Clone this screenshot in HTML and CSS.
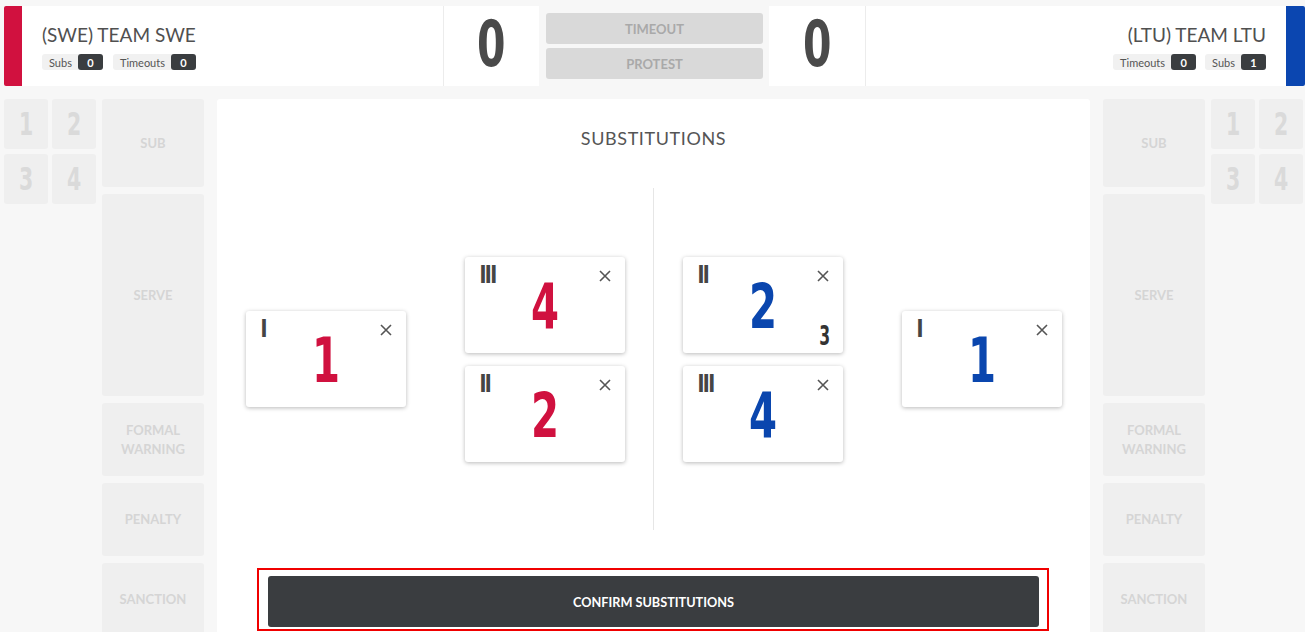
FILE: index.html
```html
<!DOCTYPE html>
<html lang="en">
<head>
<meta charset="utf-8">
<title>Substitutions</title>
<link rel="stylesheet" href="styles.css">
</head>
<body>
<header class="scoreboard">
  <div class="team team-left">
    <div class="team-bar"></div>
    <div class="team-info">
      <div class="team-name">(SWE) TEAM SWE</div>
      <div class="stats">
        <span class="pill">Subs <b>0</b></span>
        <span class="pill">Timeouts <b>0</b></span>
      </div>
    </div>
  </div>
  <div class="score score-left"><span class="cond">0</span></div>
  <div class="mid">
    <button class="mid-btn">TIMEOUT</button>
    <button class="mid-btn">PROTEST</button>
  </div>
  <div class="score score-right"><span class="cond">0</span></div>
  <div class="team team-right">
    <div class="team-info">
      <div class="team-name">(LTU) TEAM LTU</div>
      <div class="stats">
        <span class="pill">Timeouts <b>0</b></span>
        <span class="pill">Subs <b>1</b></span>
      </div>
    </div>
    <div class="team-bar"></div>
  </div>
</header>

<main class="court">
  <aside class="side side-left">
    <div class="tiles">
      <div class="tile"><span class="cond">1</span></div>
      <div class="tile"><span class="cond">2</span></div>
      <div class="tile"><span class="cond">3</span></div>
      <div class="tile"><span class="cond">4</span></div>
    </div>
    <div class="actions">
      <div class="action a-sub">SUB</div>
      <div class="action a-serve">SERVE</div>
      <div class="action a-sm">FORMAL<br>WARNING</div>
      <div class="action a-sm">PENALTY</div>
      <div class="action a-sm">SANCTION</div>
    </div>
  </aside>

  <section class="panel">
    <h1 class="panel-title">SUBSTITUTIONS</h1>
    <div class="sub-body">
      <div class="half">
        <div class="card">
          <span class="roman">I</span>
          <svg class="close" viewBox="0 0 12 12"><path d="M1 1L11 11M11 1L1 11"/></svg>
          <span class="card-num red cond">1</span>
        </div>
        <div class="card-col">
          <div class="card">
            <span class="roman">III</span>
            <svg class="close" viewBox="0 0 12 12"><path d="M1 1L11 11M11 1L1 11"/></svg>
            <span class="card-num red cond">4</span>
          </div>
          <div class="card">
            <span class="roman">II</span>
            <svg class="close" viewBox="0 0 12 12"><path d="M1 1L11 11M11 1L1 11"/></svg>
            <span class="card-num red cond">2</span>
          </div>
        </div>
      </div>
      <div class="half">
        <div class="card-col">
          <div class="card">
            <span class="roman">II</span>
            <svg class="close" viewBox="0 0 12 12"><path d="M1 1L11 11M11 1L1 11"/></svg>
            <span class="card-num blue cond">2</span>
            <span class="card-sub">3</span>
          </div>
          <div class="card">
            <span class="roman">III</span>
            <svg class="close" viewBox="0 0 12 12"><path d="M1 1L11 11M11 1L1 11"/></svg>
            <span class="card-num blue cond">4</span>
          </div>
        </div>
        <div class="card">
          <span class="roman">I</span>
          <svg class="close" viewBox="0 0 12 12"><path d="M1 1L11 11M11 1L1 11"/></svg>
          <span class="card-num blue cond">1</span>
        </div>
      </div>
    </div>
    <div class="confirm-wrap">
      <button class="confirm">CONFIRM SUBSTITUTIONS</button>
    </div>
  </section>

  <aside class="side side-right">
    <div class="actions">
      <div class="action a-sub">SUB</div>
      <div class="action a-serve">SERVE</div>
      <div class="action a-sm">FORMAL<br>WARNING</div>
      <div class="action a-sm">PENALTY</div>
      <div class="action a-sm">SANCTION</div>
    </div>
    <div class="tiles">
      <div class="tile"><span class="cond">1</span></div>
      <div class="tile"><span class="cond">2</span></div>
      <div class="tile"><span class="cond">3</span></div>
      <div class="tile"><span class="cond">4</span></div>
    </div>
  </aside>
</main>
</body>
</html>
```

FILE: styles.css
```css
* { box-sizing: border-box; }

html, body {
  margin: 0;
  height: 632px;
  overflow: hidden;
}

body {
  background: #f7f7f7;
  font-family: Lato, "Noto Sans", sans-serif;
  color: #555;
}

/* condensed digit look: DejaVu Sans Bold narrowed */
.cond {
  display: inline-block;
  transform: scaleX(0.64);
}

/* ---------- scoreboard ---------- */
.scoreboard {
  display: flex;
  height: 80px;
  margin-top: 6px;
  padding-left: 4px;
}

.team {
  display: flex;
  background: #fff;
}

.team-left {
  width: 440px;
  border-right: 1px solid #ececec;
}

.team-right {
  flex: 1;
  justify-content: flex-end;
}

.team-bar {
  flex: none;
  width: 18px;
}

.team-left .team-bar {
  background: #d1113f;
  border-radius: 2px 0 0 2px;
}

.team-right .team-bar {
  width: 19px;
  background: #0b46b0;
  border-radius: 0 2px 2px 0;
}

.team-info {
  padding: 17px 20px 0;
}

.team-right .team-info {
  text-align: right;
}

.team-name {
  font-size: 19px;
  line-height: 23px;
  color: #505050;
}

.stats {
  display: flex;
  gap: 10px;
  margin-top: 8px;
}

.team-right .stats {
  justify-content: flex-end;
  gap: 9px;
}

.pill {
  display: flex;
  align-items: center;
  gap: 6px;
  height: 16px;
  padding-left: 7px;
  background: #f1f1f1;
  border-radius: 3px;
  font-size: 11px;
  color: #555;
}

.pill b {
  display: flex;
  align-items: center;
  justify-content: center;
  width: 25px;
  height: 16px;
  background: #3a3d40;
  color: #fff;
  border-radius: 3px;
  font-size: 11px;
  font-weight: 700;
}

.score {
  display: flex;
  align-items: center;
  justify-content: center;
  padding-bottom: 5px;
  background: #fff;
  font-family: "DejaVu Sans", sans-serif;
  font-weight: 700;
  font-size: 64px;
  line-height: 1;
  color: #4a4a4a;
}

.score-left { width: 95px; }

.score-right {
  width: 97px;
  border-right: 1px solid #ececec;
}

.mid {
  display: flex;
  flex-direction: column;
  gap: 4px;
  width: 217px;
  margin: 0 6px 0 7px;
  padding-top: 7px;
}

.mid-btn {
  height: 31px;
  border: 0;
  border-radius: 3px;
  background: #d9d9d9;
  color: #a9a9a9;
  font-family: Lato, sans-serif;
  font-weight: 700;
  font-size: 13px;
  padding: 0;
}

/* ---------- court ---------- */
.court {
  display: flex;
  margin-top: 13px;
  padding-left: 4px;
  height: 533px;
  overflow: hidden;
}

.side {
  display: flex;
  gap: 6px;
  align-items: flex-start;
  flex: none;
}

.tiles {
  display: grid;
  grid-template-columns: 44px 44px;
  grid-auto-rows: 50px;
  column-gap: 4px;
  row-gap: 5px;
}

.tile {
  display: flex;
  align-items: center;
  justify-content: center;
  background: #efefef;
  border-radius: 3px;
  font-family: "DejaVu Sans", sans-serif;
  font-weight: 700;
  font-size: 32px;
  line-height: 1;
  color: #dadada;
}

.actions {
  display: flex;
  flex-direction: column;
  gap: 7px;
  width: 102px;
}

.action {
  display: flex;
  align-items: center;
  justify-content: center;
  text-align: center;
  background: #efefef;
  border-radius: 3px;
  font-weight: 700;
  font-size: 13px;
  line-height: 19px;
  color: #d5d5d5;
}

.a-sub { height: 88px; }
.a-serve { height: 202px; }
.a-sm { height: 73px; }

/* ---------- panel ---------- */
.panel {
  flex: none;
  width: 873px;
  margin: 0 13px;
  background: #fff;
  border-radius: 3px 3px 0 0;
}

.panel-title {
  margin: 0;
  padding-top: 28px;
  text-align: center;
  font-size: 18px;
  line-height: 22px;
  font-weight: 400;
  letter-spacing: 0.6px;
  color: #555;
}

.sub-body {
  display: flex;
  height: 342px;
  margin-top: 39px;
}

.half {
  flex: 1;
  display: flex;
  align-items: center;
  justify-content: center;
  gap: 59px;
}

.half + .half {
  border-left: 1px solid #e6e6e6;
}

.card-col {
  display: flex;
  flex-direction: column;
  gap: 13px;
}

.card {
  position: relative;
  display: flex;
  align-items: center;
  justify-content: center;
  width: 160px;
  height: 96px;
  background: #fff;
  border-radius: 3px;
  box-shadow: 0 1px 4px rgba(0, 0, 0, 0.28);
}

.roman {
  position: absolute;
  left: 15px;
  top: 5px;
  font-family: "Liberation Sans", Arial, sans-serif;
  font-weight: 700;
  font-size: 25px;
  line-height: 1;
  letter-spacing: -1.6px;
  color: #454545;
}

.close {
  position: absolute;
  top: 13px;
  right: 14px;
  width: 12px;
  height: 12px;
  fill: none;
  stroke: #555;
  stroke-width: 1.6;
}

.card-num {
  margin-top: 3px;
  font-family: "DejaVu Sans", sans-serif;
  font-weight: 700;
  font-size: 63px;
  line-height: 1;
}

.red { color: #d0113f; }
.blue { color: #0a46ae; }

.card-sub {
  position: absolute;
  right: 12px;
  bottom: 4px;
  font-family: "DejaVu Sans", sans-serif;
  font-weight: 700;
  font-size: 26px;
  line-height: 1;
  color: #333;
  transform: scaleX(0.6);
  transform-origin: right center;
}

.confirm-wrap {
  margin: 38px 41px 0 40px;
  border: 2px solid #f00000;
  padding: 6px 8px 2px 9px;
}

.confirm {
  display: block;
  width: 100%;
  height: 51px;
  border: 0;
  border-radius: 3px;
  background: #3a3d40;
  color: #fff;
  font-family: Lato, sans-serif;
  font-weight: 700;
  font-size: 12.7px;
  padding: 0;
}
```
